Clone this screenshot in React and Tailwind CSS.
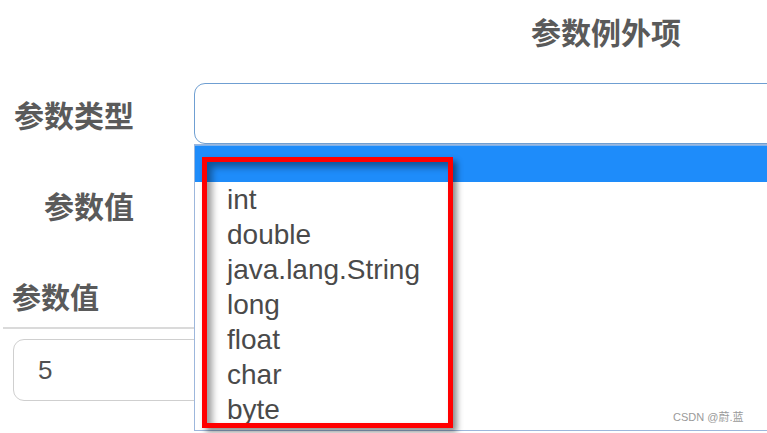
export default function App() {
  const items = ["int", "double", "java.lang.String", "long", "float", "char", "byte"];
  return (
    <div className="relative w-[767px] h-[433px] overflow-hidden bg-white text-[#5a5a5a] font-['Liberation_Sans','Noto_Sans_CJK_SC',sans-serif]">
      {/* title */}
      <div className="h-[83px] pt-[12px] pl-[531px] text-[30px] leading-[38px] font-bold font-['Noto_Sans_CJK_SC',sans-serif]">
        参数例外项
      </div>

      {/* 参数类型 row */}
      <div className="flex items-center h-[61px]">
        <div className="w-[194px] shrink-0 pl-[14px] text-[30px] leading-[40px] font-bold font-['Noto_Sans_CJK_SC',sans-serif]">
          参数类型
        </div>
        <div className="h-[61px] w-[600px] shrink-0 border border-[#6f9fd2] rounded-l-[11px] bg-white" />
      </div>

      {/* 参数值 row */}
      <div className="h-[124px] flex items-center pb-[2px]">
        <div className="pl-[44px] text-[30px] leading-[40px] font-bold font-['Noto_Sans_CJK_SC',sans-serif]">
          参数值
        </div>
      </div>

      {/* second section */}
      <div className="pl-[12px] h-[59px] flex items-center pb-[4px] text-[29px] leading-[40px] font-bold font-['Noto_Sans_CJK_SC',sans-serif]">
        参数值
      </div>
      <div className="ml-[3px] w-[300px] h-[2px] bg-[#dadada]" />
      <div className="ml-[13px] mt-[10px] w-[300px] h-[62px] border border-[#cfcfcf] rounded-[11px] flex items-center pl-[24px] text-[26px] text-[#505050]">
        5
      </div>

      {/* dropdown list overlay */}
      <div className="absolute left-[194px] top-[144px] w-[600px] h-[287px] bg-white border border-[#9db7dc]">
        <div className="h-[37px] bg-[#1e8cfa] border-t border-[#7fb2ea]" />
        <ul className="pl-[32px] text-[28px] leading-[35px] text-[#4a4a4a] font-['Liberation_Sans',Arial,sans-serif]">
          {items.map((t) => (
            <li key={t} className="h-[35px]">{t}</li>
          ))}
        </ul>
      </div>

      {/* red annotation frame */}
      <div className="absolute left-[202px] top-[157px] w-[251px] h-[271px] border-[5px] border-[#ff0000] shadow-[4px_4px_6px_rgba(0,0,0,0.45),inset_5px_5px_7px_rgba(0,0,0,0.4)]" />

      {/* watermark */}
      <div className="absolute left-[673px] top-[410px] text-[11px] leading-[14px] text-[#9a9a9a] font-['Liberation_Sans','Noto_Sans_CJK_SC',sans-serif]">
        CSDN @蔚.蓝
      </div>
    </div>
  );
}
